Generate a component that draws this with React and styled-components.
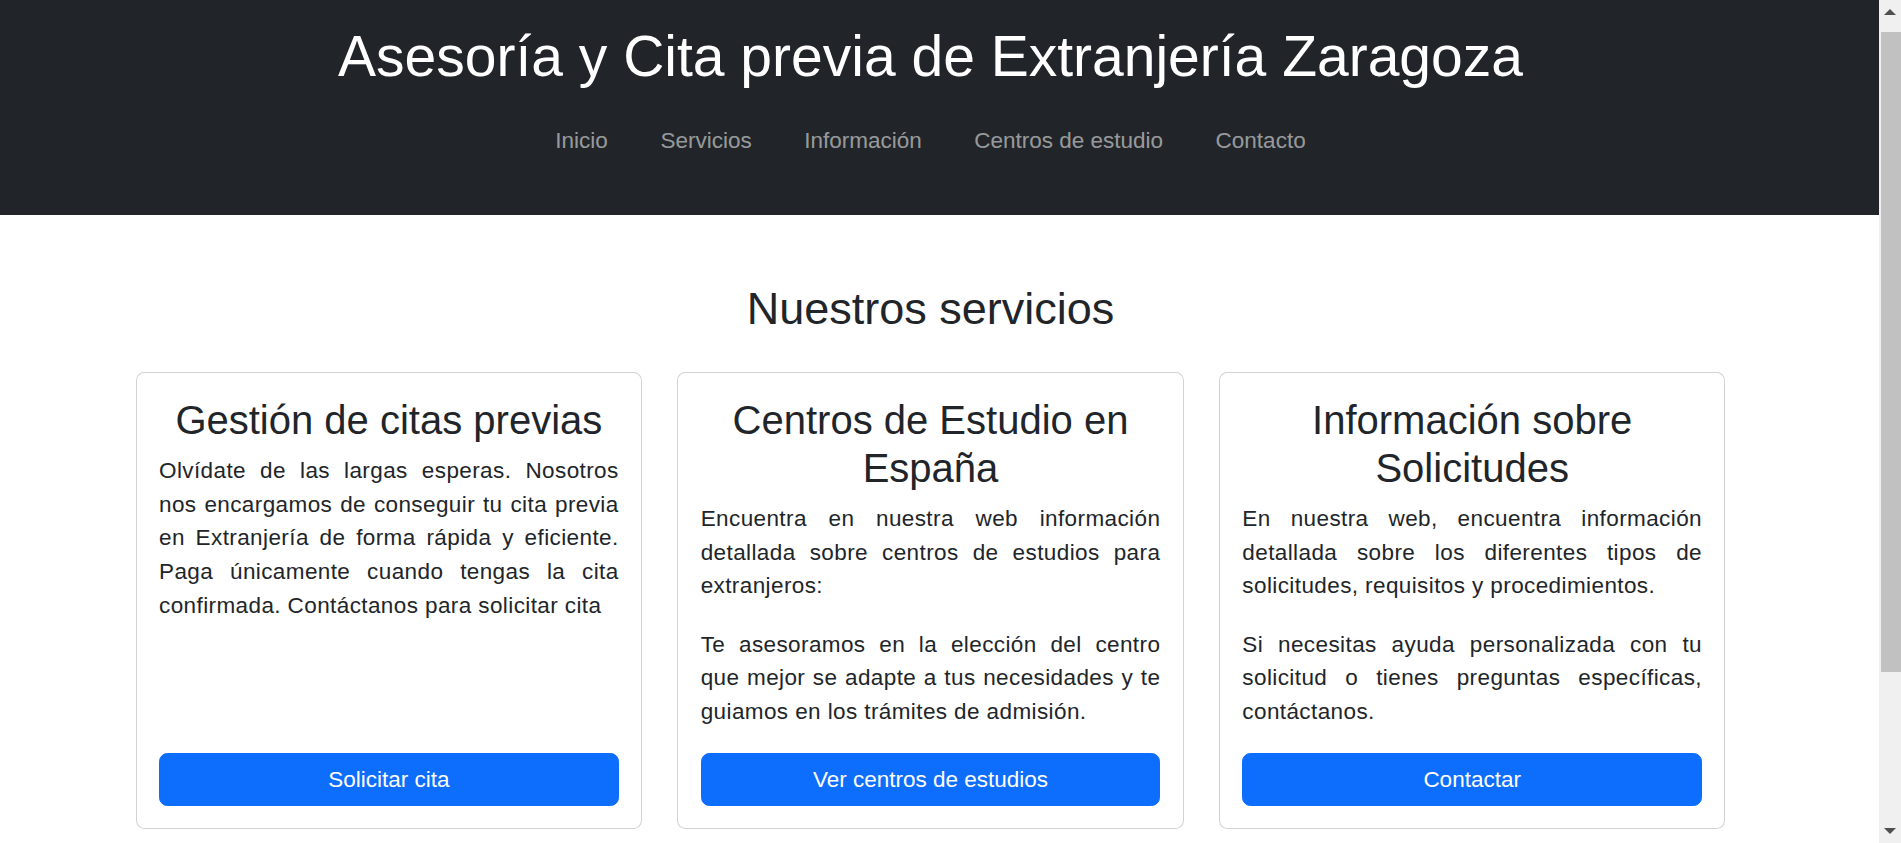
import styled, { createGlobalStyle } from 'styled-components';

const GlobalStyle = createGlobalStyle`
  *, *::before, *::after { box-sizing: border-box; }
  body {
    margin: 0;
    font-family: "Liberation Sans", Arial, sans-serif;
    font-size: 22.5px;
    line-height: 1.5;
    color: #212529;
    background: #fff;
  }
`;

const Shell = styled.div`
  display: grid;
  grid-template-columns: minmax(0, 1fr) 22px;
  align-items: start;
`;

const Page = styled.div`
  min-width: 0;
`;

/* barra de desplazamiento dibujada (la del navegador no sale en la captura) */
const ScrollBar = styled.div`
  position: sticky;
  top: 0;
  height: 100vh;
  display: flex;
  flex-direction: column;
  background: #f0f0f0;
`;

const ScrollArrow = styled.div`
  height: 24px;
  display: flex;
  align-items: center;
  justify-content: center;
  margin-top: ${p => (p.$down ? 'auto' : '0')};

  &::before {
    content: '';
    border-left: 6px solid transparent;
    border-right: 6px solid transparent;
    ${p => (p.$down ? 'border-top' : 'border-bottom')}: 6px solid #505050;
  }
`;

const ScrollThumb = styled.div`
  margin: 8px 0 0 2px;
  height: 640px;
  background: #c1c1c1;
`;

const Header = styled.header`
  background: #212529;
  height: 215px;
  padding: 21.7px 18px 0 0;
  text-align: center;
`;

const SiteTitle = styled.h1`
  margin: 0 0 26.2px;
  font-size: 57px;
  font-weight: 400;
  line-height: 1.2;
  color: #fff;
`;

const NavList = styled.nav`
  display: flex;
  justify-content: center;
  gap: 52.5px;
`;

const NavLink = styled.a`
  padding: 8px 0;
  color: rgba(255, 255, 255, 0.55);
  text-decoration: none;
  font-size: 22.5px;
  line-height: 1.5;
`;

const Main = styled.main`
  padding: 67.4px 18px 60px 0;
`;

const SectionTitle = styled.h2`
  margin: 0 0 35.9px;
  font-size: 45px;
  font-weight: 400;
  line-height: 1.2;
  text-align: center;
`;

const CardGrid = styled.div`
  display: grid;
  grid-template-columns: repeat(3, 1fr);
  gap: 35px;
  max-width: 1590px;
  margin: 0 auto;
`;

const Card = styled.div`
  display: flex;
  flex-direction: column;
  padding: 22.5px;
  border: 1px solid rgba(0, 0, 0, 0.175);
  border-radius: 8.4px;
  background: #fff;
`;

const CardTitle = styled.h3`
  margin: 0 0 10px;
  font-size: 40px;
  font-weight: 400;
  line-height: 1.2;
  text-align: center;
`;

const CardText = styled.p`
  margin: 0 0 24.5px;
  text-align: justify;
  letter-spacing: 0.4px;
`;

const ActionButton = styled.a`
  display: block;
  margin-top: auto;
  padding: 8.44px 16.9px;
  border: 1px solid #0d6efd;
  border-radius: 8.4px;
  background: #0d6efd;
  color: #fff;
  text-align: center;
  text-decoration: none;
  font-size: 22.5px;
  line-height: 1.5;
`;

const links = ['Inicio', 'Servicios', 'Información', 'Centros de estudio', 'Contacto'];

const servicios = [
  {
    titulo: 'Gestión de citas previas',
    textos: [
      'Olvídate de las largas esperas. Nosotros nos encargamos de conseguir tu cita previa en Extranjería de forma rápida y eficiente. Paga únicamente cuando tengas la cita confirmada. Contáctanos para solicitar cita',
    ],
    boton: 'Solicitar cita',
  },
  {
    titulo: 'Centros de Estudio en España',
    textos: [
      'Encuentra en nuestra web información detallada sobre centros de estudios para extranjeros:',
      'Te asesoramos en la elección del centro que mejor se adapte a tus necesidades y te guiamos en los trámites de admisión.',
    ],
    boton: 'Ver centros de estudios',
  },
  {
    titulo: 'Información sobre Solicitudes',
    textos: [
      'En nuestra web, encuentra información detallada sobre los diferentes tipos de solicitudes, requisitos y procedimientos.',
      'Si necesitas ayuda personalizada con tu solicitud o tienes preguntas específicas, contáctanos.',
    ],
    boton: 'Contactar',
  },
];

export default function App() {
  return (
    <>
      <GlobalStyle />
      <Shell>
        <Page>
          <Header>
            <SiteTitle>Asesoría y Cita previa de Extranjería Zaragoza</SiteTitle>
            <NavList>
              {links.map(link => (
                <NavLink key={link} href="#">{link}</NavLink>
              ))}
            </NavList>
          </Header>
          <Main>
            <SectionTitle>Nuestros servicios</SectionTitle>
            <CardGrid>
              {servicios.map(servicio => (
                <Card key={servicio.titulo}>
                  <CardTitle>{servicio.titulo}</CardTitle>
                  {servicio.textos.map(texto => (
                    <CardText key={texto}>{texto}</CardText>
                  ))}
                  <ActionButton href="#">{servicio.boton}</ActionButton>
                </Card>
              ))}
            </CardGrid>
          </Main>
        </Page>
        <ScrollBar>
          <ScrollArrow />
          <ScrollThumb />
          <ScrollArrow $down />
        </ScrollBar>
      </Shell>
    </>
  );
}
